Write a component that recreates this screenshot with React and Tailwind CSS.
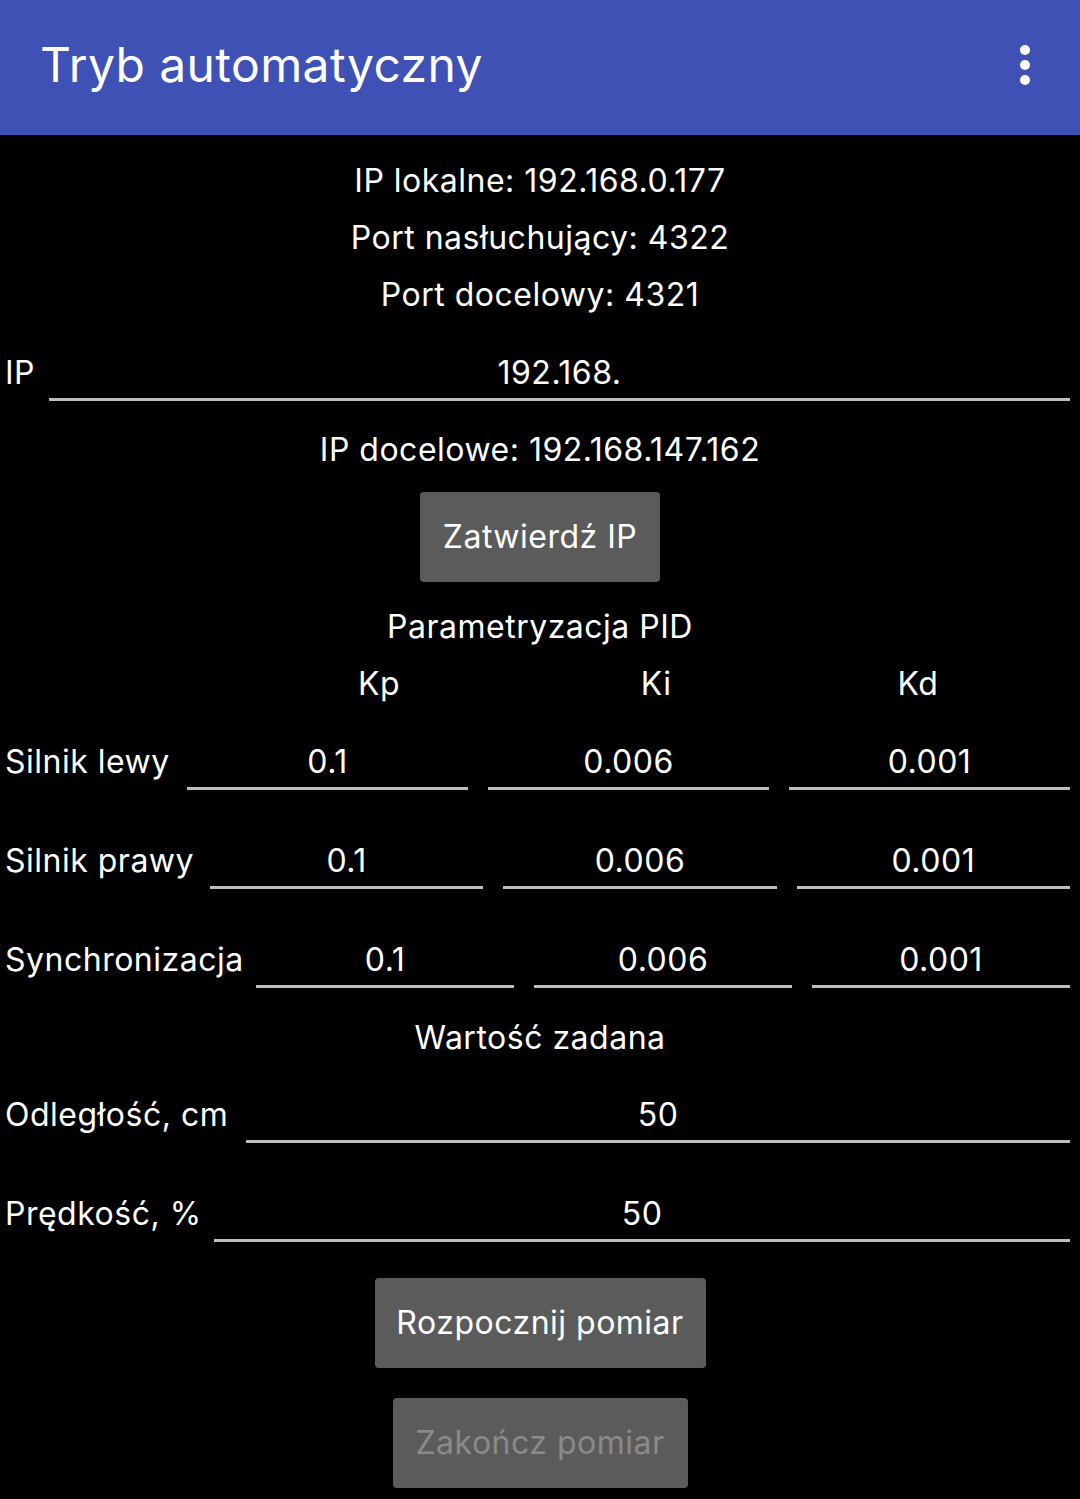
import { useState } from "react";

const font = { fontFamily: "Inter, 'Noto Sans', sans-serif" };

function Field({ value, onChange }) {
  return (
    <input
      value={value}
      onChange={(e) => onChange(e.target.value)}
      className="w-0 flex-1 min-w-0 h-[54px] bg-transparent border-b-[3px] border-[#bdbdbd] text-center text-white text-[32px] leading-[51px] tracking-[0.5px] outline-none"
      style={font}
    />
  );
}

function Row({ label, labelWidth, values, setValue, className }) {
  return (
    <div className={`flex items-start pl-[5px] pr-[10px] ${className}`}>
      <span className={`${labelWidth} shrink-0 leading-[51px] whitespace-nowrap`}>{label}</span>
      <div className="flex flex-1 min-w-0 gap-[20px]">
        {values.map((v, i) => (
          <Field key={i} value={v} onChange={(nv) => setValue(i, nv)} />
        ))}
      </div>
    </div>
  );
}

export default function App() {
  const [ip, setIp] = useState("192.168.");
  const [pid, setPid] = useState([
    ["0.1", "0.006", "0.001"],
    ["0.1", "0.006", "0.001"],
    ["0.1", "0.006", "0.001"],
  ]);
  const [distance, setDistance] = useState("50");
  const [speed, setSpeed] = useState("50");

  const updatePid = (row) => (i, v) => {
    const next = pid.map((r) => [...r]);
    next[row][i] = v;
    setPid(next);
  };

  return (
    <div className="w-[1080px] min-h-[1499px] bg-black text-white text-[32px] tracking-[0.5px] overflow-hidden" style={font}>
      <div className="h-[135px] bg-[#3f51b5] flex items-center justify-between pl-[40px] pr-[50px]">
        <span className="text-[48px] leading-none tracking-[0.4px] pb-[6px]">Tryb automatyczny</span>
        <div className="flex flex-col gap-[5px] pb-[5px]">
          <span className="w-[10px] h-[10px] rounded-full bg-white" />
          <span className="w-[10px] h-[10px] rounded-full bg-white" />
          <span className="w-[10px] h-[10px] rounded-full bg-white" />
        </div>
      </div>

      <div className="pt-[17px] text-center leading-[57px]">
        <div>IP lokalne: 192.168.0.177</div>
        <div>Port nasłuchujący: 4322</div>
        <div>Port docelowy: 4321</div>
      </div>

      <Row
        label="IP"
        labelWidth="w-[44px]"
        values={[ip]}
        setValue={(i, v) => setIp(v)}
        className="mt-[24px]"
      />

      <div className="mt-[20px] text-center leading-[57px]">IP docelowe: 192.168.147.162</div>

      <div className="flex justify-center mt-[14px]">
        <button className="w-[240px] h-[90px] bg-[#5b5b5b] rounded-[4px] text-white">Zatwierdź IP</button>
      </div>

      <div className="mt-[16px] text-center leading-[57px]">Parametryzacja PID</div>
      <div className="flex pl-[240px] leading-[57px]">
        <span className="w-[278px] text-center">Kp</span>
        <span className="w-[276px] text-center">Ki</span>
        <span className="w-[248px] text-center">Kd</span>
      </div>

      <Row label="Silnik lewy" labelWidth="w-[182px]" values={pid[0]} setValue={updatePid(0)} className="mt-[24px]" />
      <Row label="Silnik prawy" labelWidth="w-[205px]" values={pid[1]} setValue={updatePid(1)} className="mt-[45px]" />
      <Row label="Synchronizacja" labelWidth="w-[251px]" values={pid[2]} setValue={updatePid(2)} className="mt-[45px]" />

      <div className="mt-[21px] text-center leading-[57px]">Wartość zadana</div>

      <Row
        label="Odległość, cm"
        labelWidth="w-[241px]"
        values={[distance]}
        setValue={(i, v) => setDistance(v)}
        className="mt-[23px]"
      />
      <Row
        label="Prędkość, %"
        labelWidth="w-[209px]"
        values={[speed]}
        setValue={(i, v) => setSpeed(v)}
        className="mt-[45px]"
      />

      <div className="flex flex-col items-center mt-[36px] gap-[30px] pb-[11px]">
        <button className="w-[331px] h-[90px] bg-[#5b5b5b] rounded-[4px] text-white">Rozpocznij pomiar</button>
        <button disabled className="w-[295px] h-[90px] bg-[#5b5b5b] rounded-[4px] text-[#8a8a8a]">
          Zakończ pomiar
        </button>
      </div>
    </div>
  );
}
